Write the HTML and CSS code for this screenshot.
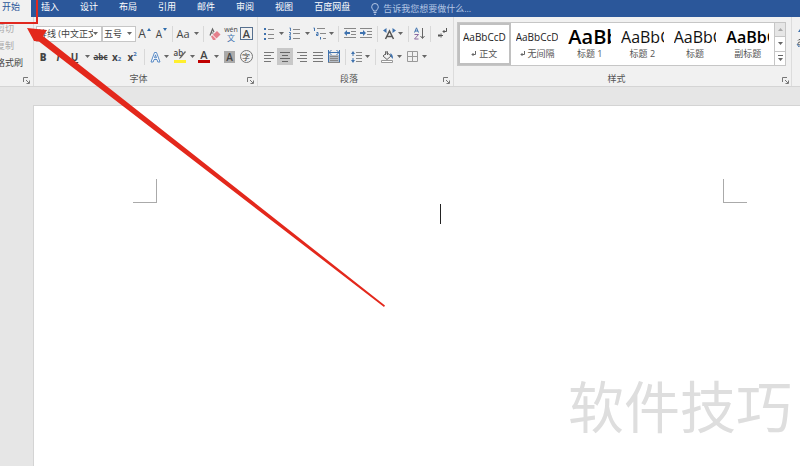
FILE: index.html
```html
<!DOCTYPE html>
<html lang="zh-CN">
<head>
<meta charset="utf-8">
<title>Word</title>
<link rel="stylesheet" href="styles.css">
</head>
<body>
<svg class="defs" aria-hidden="true">
  <symbol id="arr" viewBox="0 0 5 3"><path d="M0 0h5L2.500 3z" fill="#666"/></symbol>
  <symbol id="launch" viewBox="0 0 7 7"><path d="M.5 5V.5H5M3 3l3 3M6.500 3.500v3h-3" fill="none" stroke="#777"/></symbol>
</svg>

<nav class="tabs">
  <a class="tab active" href="#">开始</a>
  <a class="tab" href="#">插入</a>
  <a class="tab" href="#">设计</a>
  <a class="tab" href="#">布局</a>
  <a class="tab" href="#">引用</a>
  <a class="tab" href="#">邮件</a>
  <a class="tab" href="#">审阅</a>
  <a class="tab" href="#">视图</a>
  <a class="tab" href="#">百度网盘</a>
  <button class="tell">
    <svg width="8" height="12" viewBox="0 0 8 12" fill="none" stroke="#b4c6e4"><path d="M2.500 8C2.500 6.500.7 6 .7 3.800a3.300 3.300 0 0 1 6.600 0C7.300 6 5.500 6.500 5.500 8zM2.500 9.500h3M3 11.300h2"/></svg>
    告诉我您想要做什么...
  </button>
</nav>

<header class="ribbon">
  <section class="group clipboard">
    <div class="clips">
      <button class="clip off">剪切</button>
      <button class="clip off">复制</button>
      <button class="clip">格式刷</button>
    </div>
    <div class="caption"><button class="launcher" aria-label="剪贴板设置"><svg width="7" height="7"><use href="#launch"/></svg></button></div>
  </section>

  <section class="group font">
    <div class="row font-top">
      <span class="combo"><select aria-label="字体"><option>等线 (中文正文)</option></select><svg width="5" height="3"><use href="#arr"/></svg></span>
      <span class="combo"><select aria-label="字号"><option>五号</option></select><svg width="5" height="3"><use href="#arr"/></svg></span>
      <button class="glyph" aria-label="增大字号">A<svg width="4" height="3" viewBox="0 0 4 3"><path d="M0 3L2 0l2 3z" fill="#2f6dad"/></svg></button>
      <button class="glyph small" aria-label="减小字号">A<svg width="4" height="3" viewBox="0 0 4 3"><path d="M0 0h4L2 3z" fill="#2f6dad"/></svg></button>
      <i class="sep"></i>
      <button class="case" aria-label="更改大小写">Aa<svg width="5" height="3"><use href="#arr"/></svg></button>
      <i class="sep"></i>
      <button aria-label="清除格式"><svg width="14" height="14" viewBox="0 0 14 14" fill="none"><path d="M3 8.500L5.500 2 7 5M3.500 6h3" stroke="#666" stroke-width="1.200"/><path d="M4 9.500L10 4l3.500 3.500L8 13H6z" fill="#e5808c"/><path d="M5.500 8l4 4" stroke="#fff"/></svg></button>
      <button class="pinyin" aria-label="拼音指南"><span>wén</span><b>文</b></button>
      <button aria-label="字符边框"><span class="boxed">A</span></button>
    </div>
    <div class="row font-bottom">
      <button class="fmt"><b>B</b></button>
      <button class="fmt"><em>I</em></button>
      <button class="fmt"><u>U</u></button>
      <button aria-label="下划线选项"><svg width="5" height="3"><use href="#arr"/></svg></button>
      <button class="fmt tiny"><s>abc</s></button>
      <button class="fmt mid">x<small class="low">2</small></button>
      <button class="fmt mid">x<small class="high">2</small></button>
      <i class="sep"></i>
      <button aria-label="文本效果"><svg width="11" height="12" viewBox="0 0 11 12"><path d="M1 11L4.500 1.500h2L10 11H7.800L7 8.500H4L3.200 11zM4.500 6.800h2l-1-3z" fill="#fff" stroke="#4a7fc0" stroke-width=".9"/></svg></button>
      <button aria-label="文本效果选项"><svg width="5" height="3"><use href="#arr"/></svg></button>
      <button class="marker" aria-label="突出显示"><span>ab</span><svg width="12" height="12" viewBox="0 0 12 12"><path d="M11 0L6 6l-1 2 2-1 5-6z" fill="#666"/><path d="M0 9h12v3H0z" fill="#ffef2e"/></svg></button>
      <button aria-label="突出显示选项"><svg width="5" height="3"><use href="#arr"/></svg></button>
      <button aria-label="字体颜色"><span class="inked">A</span></button>
      <button aria-label="字体颜色选项"><svg width="5" height="3"><use href="#arr"/></svg></button>
      <button aria-label="字符底纹"><span class="shaded">A</span></button>
      <button aria-label="带圈字符"><span class="ringed">字</span></button>
    </div>
    <div class="caption"><span>字体</span><button class="launcher" aria-label="字体设置"><svg width="7" height="7"><use href="#launch"/></svg></button></div>
  </section>

  <section class="group para">
    <div class="row para-top">
      <button aria-label="项目符号"><svg width="10" height="12" viewBox="0 0 10 12"><path d="M0 0h2v2H0zM0 5h2v2H0zM0 10h2v2H0z" fill="#3f72ae"/><path d="M4 1.500h6M4 6.500h6M4 10.500h6" stroke="#888"/></svg></button>
      <button aria-label="项目符号选项"><svg width="5" height="3"><use href="#arr"/></svg></button>
      <button aria-label="编号"><svg width="11" height="13" viewBox="0 0 11 13"><path d="M.5 1h1v3M0 5.500h1.500v1.500L.5 8H2M0 9.500h1.500v3H0M0 11h1.500" fill="none" stroke="#3f72ae" stroke-width=".9"/><path d="M4 2.500h7M4 6.500h7M4 11.500h7" stroke="#888"/></svg></button>
      <button aria-label="编号选项"><svg width="5" height="3"><use href="#arr"/></svg></button>
      <button aria-label="多级列表"><svg width="13" height="13" viewBox="0 0 13 13"><path d="M.5 1h1v3M3.500 5.500h1.500v3H3.500V7h1M7.500 10v2.500" fill="none" stroke="#3f72ae"/><path d="M4 1.500h8M7 6.500h6M10 11.500h3" stroke="#888"/></svg></button>
      <button aria-label="多级列表选项"><svg width="5" height="3"><use href="#arr"/></svg></button>
      <i class="sep"></i>
      <button aria-label="减少缩进"><svg width="12" height="11" viewBox="0 0 12 11"><path d="M0 .5h12M7 3.500h5M7 6.500h5M0 9.500h12" stroke="#888"/><path d="M3 2L0 5l3 3V6h3V4H3z" fill="#3f72ae"/></svg></button>
      <button aria-label="增加缩进"><svg width="12" height="11" viewBox="0 0 12 11"><path d="M0 .5h12M7 3.500h5M7 6.500h5M0 9.500h12" stroke="#888"/><path d="M3 2l3 3-3 3V6H0V4h3z" fill="#3f72ae"/></svg></button>
      <i class="sep"></i>
      <button aria-label="中文版式"><svg width="13" height="12" viewBox="0 0 13 12" fill="none"><path d="M2.500 11L6.500 3l4 8M4 8.500h5" stroke="#555" stroke-width="1.500"/><path d="M3.500 0L0 2.500 3.500 5zM9.500 0L13 2.500 9.500 5z" fill="#3f72ae"/></svg></button>
      <button aria-label="中文版式选项"><svg width="5" height="3"><use href="#arr"/></svg></button>
      <i class="sep"></i>
      <button aria-label="排序"><svg width="11" height="13" viewBox="0 0 11 13" fill="none"><path d="M.5 5.500L2.500.8l2 4.700M1 4h3" stroke="#3f72ae"/><path d="M.5 7.500h4l-4 4.500h4" stroke="#8a6aa0"/><path d="M8.500 1v10M6.500 9l2 2.500 2-2.500" stroke="#666"/></svg></button>
      <i class="sep"></i>
      <button aria-label="显示编辑标记"><svg width="9" height="11" viewBox="0 0 9 11" fill="none" stroke="#555"><path d="M8.500 0v3.500H5M6.500 2L5 3.500 6.500 5M0 7.500h5M3 5.500v4M1.500 6L0 7.500 1.500 9"/></svg></button>
    </div>
    <div class="row para-bottom">
      <button aria-label="左对齐"><svg width="10" height="10" viewBox="0 0 10 10"><path d="M0 .5h10M0 3.500h7M0 6.500h10M0 9.500h7" stroke="#777"/></svg></button>
      <button class="on" aria-label="居中"><svg width="10" height="10" viewBox="0 0 10 10"><path d="M0 .5h10M2 3.500h6M0 6.500h10M2 9.500h6" stroke="#666"/></svg></button>
      <button aria-label="右对齐"><svg width="10" height="10" viewBox="0 0 10 10"><path d="M0 .5h10M3 3.500h7M0 6.500h10M3 9.500h7" stroke="#777"/></svg></button>
      <button aria-label="两端对齐"><svg width="10" height="10" viewBox="0 0 10 10"><path d="M0 .5h10M0 3.500h10M0 6.500h10M0 9.500h10" stroke="#777"/></svg></button>
      <button aria-label="分散对齐"><svg width="12" height="13" viewBox="0 0 12 13"><path d="M1 5h10v7H1z" fill="#b5bcc6"/><path d="M.5 0v12M11.500 0v12" stroke="#3f72ae"/><path d="M1 2.500h10M3.500 0L1 2.500 3.500 5M8.500 0L11 2.500 8.500 5" stroke="#3f72ae" fill="none"/><path d="M2 6.500h8M2 8.500h8M2 10.500h8M0 12.500h12" stroke="#888"/></svg></button>
      <i class="sep"></i>
      <button aria-label="行距"><svg width="11" height="12" viewBox="0 0 11 12"><path d="M5 1.500h6M5 4.500h6M5 7.500h6M5 10.500h6" stroke="#888"/><path d="M2 0l2 3H0zM2 12l2-3H0zM1.500 3h1v2h-1zM1.500 7h1v2h-1z" fill="#3f72ae"/></svg></button>
      <button aria-label="行距选项"><svg width="5" height="3"><use href="#arr"/></svg></button>
      <i class="sep"></i>
      <button aria-label="底纹"><svg width="13" height="12" viewBox="0 0 13 12" fill="none"><path d="M2 5l4-3.500L10 5 6 8.500zM4.500 4V1a1 1 0 0 1 2 0v3" stroke="#666"/><path d="M9 2.500q3 0 3 5.500l-2-2z" fill="#3f72ae"/><path d="M.5 9.500h11v2H.5z" stroke="#999" fill="#fff"/></svg></button>
      <button aria-label="底纹选项"><svg width="5" height="3"><use href="#arr"/></svg></button>
      <button aria-label="边框"><svg width="11" height="11" viewBox="0 0 11 11" fill="none"><path d="M.5.5h10v10H.5zM5.500 0v11M0 5.500h11" stroke="#999"/></svg></button>
      <button aria-label="边框选项"><svg width="5" height="3"><use href="#arr"/></svg></button>
    </div>
    <div class="caption"><span>段落</span><button class="launcher" aria-label="段落设置"><svg width="7" height="7"><use href="#launch"/></svg></button></div>
  </section>

  <section class="group styles">
    <div class="gallery">
      <button class="style chosen"><span class="sample">AaBbCcDd</span><span class="name"><svg width="5" height="6" viewBox="0 0 5 6" fill="none" stroke="#666"><path d="M4.500 0v3.500H1M2.500 2L1 3.500 2.500 5"/></svg> 正文</span></button>
      <button class="style"><span class="sample">AaBbCcDd</span><span class="name"><svg width="5" height="6" viewBox="0 0 5 6" fill="none" stroke="#666"><path d="M4.500 0v3.500H1M2.500 2L1 3.500 2.500 5"/></svg> 无间隔</span></button>
      <button class="style"><span class="sample h1">AaBb</span><span class="name">标题 1</span></button>
      <button class="style"><span class="sample h2">AaBbC</span><span class="name">标题 2</span></button>
      <button class="style"><span class="sample h2">AaBbC</span><span class="name">标题</span></button>
      <button class="style"><span class="sample h2 strong">AaBbC</span><span class="name">副标题</span></button>
      <div class="scroll">
        <button class="dim" aria-label="上一行"><svg width="5" height="3" viewBox="0 0 5 3"><path d="M0 3L2.500 0 5 3z" fill="#aaa"/></svg></button>
        <button aria-label="下一行"><svg width="5" height="3"><use href="#arr"/></svg></button>
        <button aria-label="其他"><svg width="5" height="6" viewBox="0 0 5 6"><path d="M0 0h5v1H0zM0 3h5L2.500 6z" fill="#666"/></svg></button>
      </div>
    </div>
    <div class="caption"><span>样式</span><button class="launcher" aria-label="样式设置"><svg width="7" height="7"><use href="#launch"/></svg></button></div>
  </section>

  <section class="group edit">
    <button aria-label="查找"><svg width="8" height="24" viewBox="0 0 8 24" fill="none"><path d="M8 6L6 9h2" fill="#3f72ae"/><path d="M6 17.500q.5-1 2-1M8 19q-2 0-2 1.500T8 22" stroke="#555"/><path d="M5 21l2 3h1" stroke="#3f72ae"/></svg></button>
  </section>
</header>

<main class="desk">
  <article class="page">
    <div class="margins"><i class="corner left"></i><i class="corner right"></i></div>
    <div class="caret"></div>
    <p class="watermark">软件技巧</p>
  </article>
</main>

<svg class="note" width="400" height="320" viewBox="0 0 400 320" aria-hidden="true">
  <path d="M0 23h37V0" fill="none" stroke="#e0281f" stroke-width="2"/>
  <path d="M27 28l20 2-4 6L385 305.500l-1 1.500L39 41.500 34 41z" fill="#e3281c"/>
</svg>
</body>
</html>
```
FILE: styles.css
```css
* { box-sizing: border-box; }
body {
  margin: 0;
  min-height: 100vh;
  display: flex;
  flex-direction: column;
  overflow: hidden;
  font: 9px/12px "Open Sans", "Noto Sans CJK SC", sans-serif;
  color: #444;
  background: #e6e6e6;
}
button, select { font: inherit; color: inherit; border: 0; padding: 0; margin: 0; background: none; }
button { display: flex; align-items: center; justify-content: center; min-width: 0; }
svg { display: block; flex: none; }
.defs { position: absolute; width: 0; height: 0; }

.tabs { display: flex; height: 17px; margin-left: -8px; background: #2b579a; }
.tab { padding: 1px 11px 0 10px; color: #fff; text-decoration: none; white-space: nowrap; }
.tab.active { background: #f1f1f1; color: #2b579a; }
.tell { gap: 4px; margin-left: 10px; color: #b4c6e4; white-space: nowrap; }

.ribbon { display: flex; height: 70px; background: #f1f1f1; border-bottom: 1px solid #d5d5d5; }
.group { display: flex; flex-direction: column; flex: none; padding: 5px 3px 1px 3px; border-right: 1px solid #dcdcdc; }
.caption { display: flex; align-items: center; margin-top: auto; height: 12px; color: #555; }
.caption span { flex: 1; padding-right: 6px; text-align: center; }
.launcher { margin: 3px 0 0 auto; }

.clipboard { width: 34px; }
.clips { display: flex; flex-direction: column; align-items: flex-start; margin: 1px 0 0 -7px; gap: 5px; }
.clip.off { color: #aaa; }

.row { display: grid; height: 23px; align-items: center; }
.row button { height: 17px; }
.sep { justify-self: center; width: 1px; height: 16px; background: #d8d8d8; }
.font { width: 224px; padding-left: 2px; }
.font-top { grid-template-columns: 66px 34px 17px 17px 4px 27px 4px 18px 16px 15px; }
.font-bottom { grid-template-columns: 14px 16px 17px 9px 17px 15px 16px 8px 14px 9px 17px 8px 16px 9px 17px 16px; }
.para { width: 196px; }
.para-top { grid-template-columns: 16px 8px 18px 8px 16px 8px 7px 16px 16px 7px 16px 7px 9px 13px 9px 15px; }
.para-bottom { grid-template-columns: 16px 16px 17px 15px 17px 6px 16px 7px 9px 15px 9px 16px 8px; }
.on { background: #c8c8c8; }

.combo { display: flex; align-items: center; height: 16px; padding-right: 3px; border: 1px solid #c6c6c6; background: #fff; }
.combo select { flex: 1; min-width: 0; appearance: none; padding-left: 1px; }
.glyph { gap: 1px; font-size: 12px; }
.glyph.small { font-size: 10px; }
.glyph svg { align-self: flex-start; margin-top: 3px; }
.case { gap: 4px; font-size: 11px; }
.pinyin { flex-direction: column; line-height: 8px; font-size: 7px; }
.pinyin b { color: #3f72ae; font-size: 8px; font-weight: 400; }
.boxed { width: 13px; border: 1px solid #56708f; font-size: 11px; line-height: 11px; font-weight: 600; }
.fmt { font-size: 10px; font-weight: 700; }
.fmt.tiny { font-size: 8px; }
.fmt small { font-size: 6px; color: #3f72ae; }
.fmt .low { align-self: flex-end; }
.fmt .high { align-self: flex-start; }
.marker { display: grid; }
.marker span, .marker svg { grid-area: 1 / 1; }
.marker span { align-self: start; justify-self: start; font-size: 8px; line-height: 9px; font-weight: 600; }
.inked { width: 12px; border-bottom: 3px solid #c00000; font-size: 11px; line-height: 10px; font-weight: 600; }
.shaded { width: 11px; background: #aaa; font-size: 10px; line-height: 12px; font-weight: 600; }
.ringed { width: 13px; border: 1px solid #777; border-radius: 50%; font-size: 8px; line-height: 11px; }

.styles { flex: 1; min-width: 0; padding-right: 5px; }
.styles .launcher { margin-right: -3px; }
.gallery { display: flex; height: 44px; border: 1px solid #c6c6c6; background: #fff; }
.style { flex: 1; flex-direction: column; justify-content: flex-start; padding: 3px; border: 2px solid transparent; }
.style.chosen { border-color: #c0c0c0; }
.sample { width: 100%; height: 23px; overflow: hidden; text-align: left; white-space: nowrap; color: #222; font-size: 10px; line-height: 18px; }
.sample.h1 { color: #000; font-size: 20px; font-weight: 600; }
.sample.h2 { color: #111; font-size: 16px; }
.sample.strong { color: #000; font-weight: 600; }
.name { display: flex; align-items: center; gap: 3px; color: #555; white-space: nowrap; }
.scroll { display: flex; flex-direction: column; width: 11px; border-left: 1px solid #c6c6c6; }
.scroll button { flex: 1; }
.scroll button + button { border-top: 1px solid #c6c6c6; }
.scroll .dim { background: #e6e6e6; }
.edit { width: 8px; padding: 6px 0 0; border: 0; }

.desk { flex: 1; display: flex; padding: 19px 0 0 34px; }
.page { flex: 1; display: flex; flex-direction: column; padding: 73px 53px 0 99px; background: #fff; box-shadow: 0 0 0 1px #d4d4d4; }
.margins { display: flex; justify-content: space-between; }
.corner { width: 24px; height: 24px; border: 0 solid #aaa; border-bottom-width: 1px; }
.corner.left { border-right-width: 1px; }
.corner.right { border-left-width: 1px; }
.caret { align-self: center; width: 1px; height: 20px; margin-top: 1px; background: #222; }
.watermark { margin: auto -45px 22px auto; font: 56px/80px "Noto Sans CJK SC", sans-serif; color: #dedede; white-space: nowrap; }
.note { position: absolute; left: 0; top: 0; pointer-events: none; }
```
